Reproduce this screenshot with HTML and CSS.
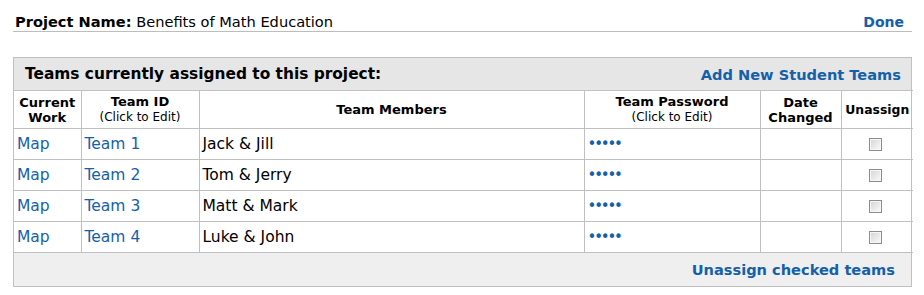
FILE: index.html
```html
<!DOCTYPE html>
<html lang="en">
<head>
    <meta charset="UTF-8">
    <title>Project Teams</title>
    <link rel="stylesheet" href="styles.css">
</head>
<body>
    <div class="page">
        <!-- Encabezado del proyecto -->
        <div class="project-bar">
            <div><strong>Project Name:</strong> Benefits of Math Education</div>
            <a href="#" class="done">Done</a>
        </div>

        <div class="panel">
            <div class="panel-head">
                <h2>Teams currently assigned to this project:</h2>
                <a href="#" class="strong-link">Add New Student Teams</a>
            </div>
            <table class="teams">
                <colgroup>
                    <col class="c-work">
                    <col class="c-id">
                    <col class="c-members">
                    <col class="c-pass">
                    <col class="c-date">
                    <col class="c-unassign">
                </colgroup>
                <thead>
                    <tr>
                        <th>Current<br>Work</th>
                        <th>Team ID<br><span class="hint">(Click to Edit)</span></th>
                        <th>Team Members</th>
                        <th>Team Password<br><span class="hint">(Click to Edit)</span></th>
                        <th>Date<br>Changed</th>
                        <th class="tight">Unassign</th>
                    </tr>
                </thead>
                <tbody>
                    <tr>
                        <td><a href="#">Map</a></td>
                        <td><a href="#">Team 1</a></td>
                        <td>Jack &amp; Jill</td>
                        <td><a href="#" class="dots">&bull;&bull;&bull;&bull;&bull;</a></td>
                        <td></td>
                        <td class="center"><input type="checkbox"></td>
                    </tr>
                    <tr>
                        <td><a href="#">Map</a></td>
                        <td><a href="#">Team 2</a></td>
                        <td>Tom &amp; Jerry</td>
                        <td><a href="#" class="dots">&bull;&bull;&bull;&bull;&bull;</a></td>
                        <td></td>
                        <td class="center"><input type="checkbox"></td>
                    </tr>
                    <tr>
                        <td><a href="#">Map</a></td>
                        <td><a href="#">Team 3</a></td>
                        <td>Matt &amp; Mark</td>
                        <td><a href="#" class="dots">&bull;&bull;&bull;&bull;&bull;</a></td>
                        <td></td>
                        <td class="center"><input type="checkbox"></td>
                    </tr>
                    <tr>
                        <td><a href="#">Map</a></td>
                        <td><a href="#">Team 4</a></td>
                        <td>Luke &amp; John</td>
                        <td><a href="#" class="dots">&bull;&bull;&bull;&bull;&bull;</a></td>
                        <td></td>
                        <td class="center"><input type="checkbox"></td>
                    </tr>
                </tbody>
            </table>
            <div class="panel-foot">
                <a href="#" class="strong-link">Unassign checked teams</a>
            </div>
        </div>
    </div>
</body>
</html>
```

FILE: styles.css
```css
body {
    margin: 0;
    font-family: "DejaVu Sans", Verdana, sans-serif;
    color: #000;
    background: #fff;
}
a {
    color: #1560aa;
    text-decoration: none;
}
.page {
    width: 899px;
    margin-left: 13px;
    padding-top: 13px;
}
.project-bar {
    display: flex;
    justify-content: space-between;
    font-size: 14.6px;
    line-height: 18px;
    border-bottom: 1px solid #bdbdbd;
    padding-left: 2px;
}
.done {
    font-weight: bold;
    font-size: 14px;
    padding-right: 8px;
}
.panel {
    margin-top: 25px;
    border: 1px solid #c0c0c0;
}
.panel-head {
    display: flex;
    justify-content: space-between;
    align-items: center;
    background: #e6e6e6;
    height: 32px;
    padding: 0 10px 0 11px;
}
.panel-head h2 {
    margin: 0;
    font-size: 15.4px;
    line-height: 20px;
}
.strong-link {
    font-weight: bold;
    font-size: 14.6px;
}
.teams {
    width: 100%;
    border-collapse: collapse;
    table-layout: fixed;
}
.c-work { width: 67px; }
.c-id { width: 118px; }
.c-members { width: 385px; }
.c-pass { width: 176px; }
.c-date { width: 81px; }
.c-unassign { width: 72px; }
.teams th, .teams td {
    border: 1px solid #c0c0c0;
}
.teams tr > :first-child { border-left: none; }
.teams tr > :last-child { border-right: none; }
.teams th {
    font-size: 13px;
    line-height: 15px;
    height: 37px;
    padding: 0 2px;
    text-align: center;
    vertical-align: middle;
}
.teams th.tight {
    font-size: 12.4px;
    padding: 0;
}
.hint {
    font-weight: normal;
    font-size: 12px;
}
.teams td {
    font-size: 15.5px;
    height: 30px;
    padding: 0 3px;
    line-height: 18px;
}
.dots {
    font-size: 15px;
    letter-spacing: -2.2px;
}
.center {
    text-align: center;
}
.teams input[type="checkbox"] {
    appearance: none;
    -webkit-appearance: none;
    width: 13px;
    height: 13px;
    margin: 3px 0 0 -4px;
    border: 1px solid #8c8c8c;
    background: linear-gradient(135deg, #d4d4d4, #fbfbfb);
    box-shadow: inset 0 0 0 1px #f6f6f6;
    vertical-align: top;
}
.panel-foot {
    background: #efefef;
    border-top: 1px solid #c0c0c0;
    height: 33px;
    display: flex;
    align-items: center;
    justify-content: flex-end;
    padding-right: 16px;
    margin-top: -1px;
}
```
